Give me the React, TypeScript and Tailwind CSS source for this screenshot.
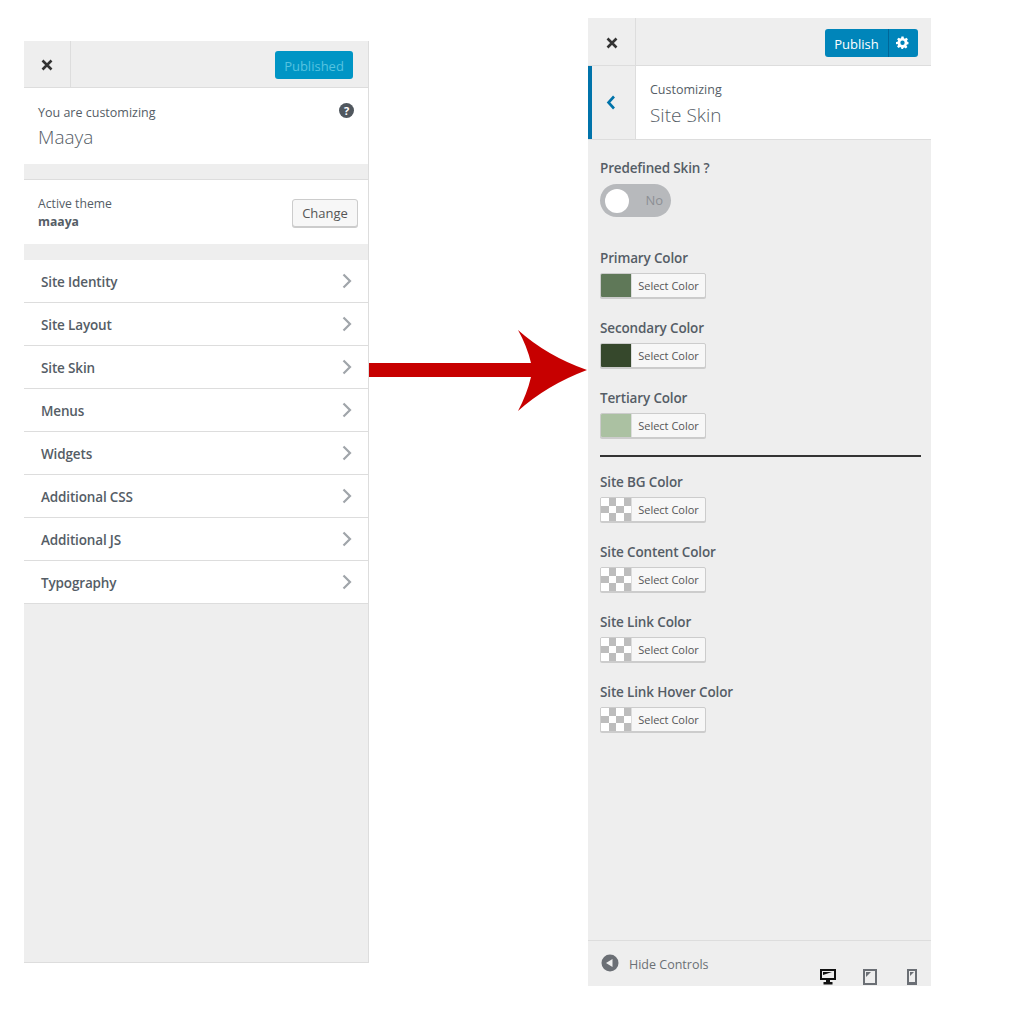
import React from "react";

const menu = ["Site Identity", "Site Layout", "Site Skin", "Menus", "Widgets", "Additional CSS", "Additional JS", "Typography"];

function CloseIcon() {
  return (
    <svg width="12" height="12" viewBox="0 0 12 12" className="block">
      <path d="M1.500 1.500 L10.500 10.500 M10.500 1.500 L1.500 10.500" stroke="#333" strokeWidth="2.6" />
    </svg>
  );
}

function ColorControl({ label, color, className = "" }: { label: string; color?: string; className?: string }) {
  return (
    <div className={`flex flex-col ${className}`}>
      <div className="text-[13.5px] leading-[20px] font-semibold tracking-[-0.15px] text-[#555d66]">{label}</div>
      <div className="mt-[5px] flex h-[25px] w-[106px] overflow-hidden rounded-[2px] border border-[#ccc] bg-[#f7f7f7] shadow-[0_1px_0_#ccc]">
        {color ? (
          <div className="h-full w-[30px] shrink-0" style={{ background: color }} />
        ) : (
          <div className="grid h-full w-[30px] shrink-0 grid-cols-4 grid-rows-3">
            {Array.from({ length: 12 }).map((_, i) => (
              <div key={i} className={(i + Math.floor(i / 4)) % 2 === 0 ? "bg-white" : "bg-[#bdbdbd]"} />
            ))}
          </div>
        )}
        <div className="flex flex-1 items-center justify-center border-l border-[#ddd] pt-[2px] text-[11px] text-[#555]">Select Color</div>
      </div>
    </div>
  );
}

export default function App() {
  return (
    <div className="flex h-[1024px] w-[1024px] items-start bg-white pl-[24px] font-['Open_Sans','Liberation_Sans',sans-serif]">
      {/* Left panel */}
      <div className="mt-[41px] flex h-[922px] w-[345px] shrink-0 flex-col border-r border-b border-[#ddd] bg-[#eee]">
        <div className="flex h-[47px] shrink-0 items-center justify-between border-b border-[#ddd] pr-[15px]">
          <div className="flex h-full w-[47px] items-center justify-center border-r border-[#ddd] pt-[2px]">
            <CloseIcon />
          </div>
          <div className="mt-[2px] flex h-[28px] w-[78px] items-center justify-center rounded-[3px] bg-[#0095c5] pt-[4px] text-[13px] text-[#56c3e0]">Published</div>
        </div>
        <div className="relative h-[76px] shrink-0 bg-white pl-[14px] pt-[15px]">
          <div className="text-[12.5px] leading-[20px] text-[#555d66]">You are customizing</div>
          <div className="text-[19px] leading-[28px] font-light text-[#555d66]">Maaya</div>
          <div className="absolute right-[14px] top-[15px] flex h-[15px] w-[15px] items-center justify-center rounded-full bg-[#50575e] text-[11px] leading-none font-bold text-white">?</div>
        </div>
        <div className="h-[16px] shrink-0 border-b border-[#ddd]" />
        <div className="flex h-[64px] shrink-0 items-center justify-between bg-white pl-[14px] pr-[10px] pt-[2px]">
          <div className="flex flex-col">
            <div className="text-[12.2px] leading-[18px] text-[#555d66]">Active theme</div>
            <div className="text-[12.2px] leading-[18px] font-bold text-[#555d66]">maaya</div>
          </div>
          <div className="flex h-[28px] w-[66px] items-center justify-center rounded-[3px] border border-[#ccc] bg-[#f7f7f7] pt-[1px] text-[13px] text-[#555] shadow-[0_1px_0_#ccc]">Change</div>
        </div>
        <div className="h-[16px] shrink-0" />
        <div className="flex flex-col">
          {menu.map((m) => (
            <div key={m} className="flex h-[43px] items-center justify-between border-b border-[#ddd] bg-white pl-[17px] pr-[16px]">
              <span className="pt-[2px] text-[13.5px] font-semibold tracking-[-0.15px] text-[#555d66]">{m}</span>
              <svg width="10" height="16" viewBox="0 0 10 16">
                <path d="M1.500 1.500 L8 8 L1.500 14.500" fill="none" stroke="#a0a5aa" strokeWidth="2.200" />
              </svg>
            </div>
          ))}
        </div>
      </div>

      {/* Arrow */}
      <svg viewBox="0 0 219 81" className="mt-[330px] h-[81px] w-[219px] shrink-0">
        <path d="M0 33 H162 Q158 16 149 0 Q178 26 218 40 Q178 55 149 81 Q158 64 162 47 H0 Z" fill="#c70000" />
      </svg>

      {/* Right panel */}
      <div className="relative mt-[18px] flex h-[968px] w-[343px] shrink-0 flex-col bg-[#eee]">
        <div className="flex h-[48px] shrink-0 items-center justify-between border-b border-[#ddd] pr-[13px]">
          <div className="flex h-full w-[48px] items-center justify-center border-r border-[#ddd] pt-[2px]">
            <CloseIcon />
          </div>
          <div className="mt-[2px] flex h-[28px] w-[93px] overflow-hidden rounded-[3px] bg-[#0085ba] text-white">
            <div className="flex flex-1 items-center justify-center pt-[4px] text-[13px]">Publish</div>
            <div className="flex w-[30px] items-center justify-center border-l border-[#006799] pr-[3px]">
              <svg viewBox="0 0 24 24" width="13" height="13">
                <path fill="#fff" fillRule="evenodd" d="M10 1h4l.6 3.200 1.900.8 2.700-1.800 2.800 2.800-1.800 2.700.8 1.900L23 11v4l-3 .6-.8 1.900 1.800 2.700-2.800 2.800-2.700-1.800-1.900.8L13 24h-3l-.6-3-1.900-.8-2.700 1.800-2.800-2.800 1.800-2.700-.8-1.900L0 15v-4l3-.6.8-1.900L2 5.800 4.800 3 7.500 4.800l1.900-.8zM12 8.500a4 4 0 1 0 0 8 4 4 0 0 0 0-8z" />
              </svg>
            </div>
          </div>
        </div>
        <div className="flex h-[74px] shrink-0 border-b border-[#ddd] bg-white">
          <div className="flex h-full w-[48px] items-center justify-center border-l-4 border-r border-l-[#0073aa] border-r-[#ddd] bg-[#eee] pr-[5px]">
            <svg width="10" height="15" viewBox="0 0 10 15">
              <path d="M8 1.500 L2.500 7.500 L8 13.500" fill="none" stroke="#0073aa" strokeWidth="2.600" />
            </svg>
          </div>
          <div className="pl-[14px] pt-[14px]">
            <div className="text-[12.5px] leading-[20px] text-[#555d66]">Customizing</div>
            <div className="mt-[1px] text-[19px] leading-[28px] font-light text-[#555d66]">Site Skin</div>
          </div>
        </div>

        <div className="flex flex-1 flex-col px-[12px]">
          <div className="mt-[18px] text-[13.5px] leading-[20px] font-semibold tracking-[-0.15px] text-[#555d66]">Predefined Skin ?</div>
          <div className="mt-[6px] flex h-[33px] w-[71px] items-center justify-between rounded-full bg-[#b7b9bc] pl-[5px] pr-[8px]">
            <div className="h-[24px] w-[24px] rounded-full bg-white" />
            <span className="text-[13px] text-[#8c8f94]">No</span>
          </div>

          <ColorControl label="Primary Color" color="#5f7858" className="mt-[31px]" />
          <ColorControl label="Secondary Color" color="#36482c" className="mt-[20px]" />
          <ColorControl label="Tertiary Color" color="#abc1a2" className="mt-[20px]" />

          <div className="mt-[17px] h-[2px] w-[321px] bg-[#333]" />

          <ColorControl label="Site BG Color" className="mt-[15px]" />
          <ColorControl label="Site Content Color" className="mt-[20px]" />
          <ColorControl label="Site Link Color" className="mt-[20px]" />
          <ColorControl label="Site Link Hover Color" className="mt-[20px]" />
        </div>

        <div className="flex h-[46px] shrink-0 items-start border-t border-[#ddd] pl-[13px] pr-[14px]">
          <svg viewBox="0 0 18 18" width="18" height="18" className="mt-[13px] shrink-0">
            <circle cx="9" cy="9" r="8.500" fill="#6b6f75" />
            <path d="M5 9 L11.500 5 V13 Z" fill="#eee" />
          </svg>
          <span className="ml-[10px] mt-[15px] text-[12.5px] leading-[18px] text-[#6b7075]">Hide Controls</span>
          <div className="ml-auto mt-[28px] flex items-center">
            <svg viewBox="0 0 16 16" width="16" height="16">
              <path fillRule="evenodd" fill="#111" d="M0 0h16v11H10v2h2.500v2.500h-9V13H6v-2H0zM2 2v7h12V2z" />
              <path fill="#111" d="M3 3h9L3 6z" />
            </svg>
            <svg viewBox="0 0 14 16" width="14" height="16" className="ml-[27px]">
              <path fillRule="evenodd" fill="#6b6f75" d="M0 0h14v16H0zM2 2v12h10V2z" />
              <path fill="#6b6f75" d="M3 3h5L3 8z" />
            </svg>
            <svg viewBox="0 0 10 16" width="10" height="16" className="ml-[30px]">
              <path fillRule="evenodd" fill="#6b6f75" d="M0 0h10v16H0zM2 2v11h6V2z" />
              <path fill="#6b6f75" d="M3 3h4L3 7z" />
            </svg>
          </div>
        </div>
      </div>
    </div>
  );
}
